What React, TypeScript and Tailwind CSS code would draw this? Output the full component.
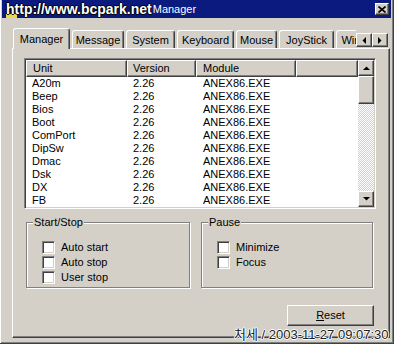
const rows = ["A20m", "Beep", "Bios", "Boot", "ComPort", "DipSw", "Dmac", "Dsk", "DX", "FB"];

const tabs = [
  { label: "Manager", w: "w-[57px]", active: true },
  { label: "Message", w: "w-[52px]" },
  { label: "System", w: "w-[49px]" },
  { label: "Keyboard", w: "w-[57px]" },
  { label: "Mouse", w: "w-[41px]" },
  { label: "JoyStick", w: "w-[55px]" },
  { label: "Window", w: "w-[50px]" },
];

const Arrow = ({ dir }: { dir: "up" | "down" | "left" | "right" }) => {
  const pts = {
    up: "0,4 7,4 3.5,0.5",
    down: "0,0 7,0 3.5,3.5",
    left: "4,0 4,7 0.5,3.5",
    right: "0,0 0,7 3.5,3.5",
  }[dir];
  const vertical = dir === "up" || dir === "down";
  return (
    <svg width={vertical ? 7 : 4} height={vertical ? 4 : 7} viewBox={vertical ? "0 0 7 4" : "0 0 4 7"}>
      <polygon points={pts} fill="#000" />
    </svg>
  );
};

const Check = ({ label }: { label: string }) => (
  <div className="flex items-center h-[15px] gap-[6px]">
    <div className="w-[13px] h-[13px] bg-white border border-t-[#808080] border-l-[#808080] border-r-white border-b-white shadow-[inset_1px_1px_#404040,inset_-1px_-1px_#d4d0c8]" />
    <span className="text-[11px] leading-[13px]">{label}</span>
  </div>
);

const Group = ({ title, w, items }: { title: string; w: string; items: string[] }) => (
  <div className={`relative ${w} h-[66px] border border-[#808080] shadow-[1px_1px_0_#fff,inset_1px_1px_0_#fff] pl-[15px] pt-[17px]`}>
    <span className="absolute left-[6px] -top-[7px] px-[1px] bg-[#d4d0c8] text-[11px] leading-[13px]">{title}</span>
    {items.map((it) => (
      <Check key={it} label={it} />
    ))}
  </div>
);

export default function App() {
  return (
    <div className="w-[396px] h-[348px] bg-white font-['Liberation_Sans','Noto_Sans_CJK_KR',sans-serif] text-black">
      <div className="relative w-[394px] h-[344px] bg-[#d4d0c8] border-r border-b border-[#404040] shadow-[inset_1px_0_#fff,inset_-1px_-1px_#808080]">
        {/* title bar */}
        <div className="ml-[2px] mr-[2px] h-[18px] bg-[#0a1a7e] flex items-center justify-between">
          <div className="relative flex items-center h-[18px] pl-[4px]">
            <span className="relative z-10 text-[14px] leading-[18px] font-bold text-white [text-shadow:1px_0_#000,-1px_0_#000,0_1px_#000,0_-1px_#000]">
              http://www.bcpark.net
            </span>
            <span className="ml-[1px] text-[11px] leading-[18px] text-white">Manager</span>
            <span className="absolute left-[4px] top-[14px] w-[11px] h-[4px] bg-[#e8d84a]" />
          </div>
          <div className="mr-[2px] w-[14px] h-[12px] bg-[#d4d0c8] border border-t-white border-l-white border-r-[#404040] border-b-[#404040] shadow-[inset_-1px_-1px_#808080] flex items-center justify-center">
            <svg width="8" height="7" viewBox="0 0 8 7">
              <path d="M0.5 0.5 L7.5 6.5 M7.5 0.5 L0.5 6.5" stroke="#000" strokeWidth="1.6" />
            </svg>
          </div>
        </div>

        {/* tab strip */}
        <div className="mt-[10px] h-[20px] flex items-end">
          <div className="ml-[13px] w-[343px] h-[21px] -mb-px overflow-hidden flex items-end gap-[2px] relative z-10">
            {tabs.map((t) => (
              <div
                key={t.label}
                className={`${t.w} shrink-0 bg-[#d4d0c8] border-t border-l border-white border-r border-r-[#404040] shadow-[inset_-1px_0_#808080] rounded-tl-[3px] rounded-tr-[3px] flex justify-center text-[11px] leading-[13px] whitespace-nowrap ${
                  t.active ? "h-[21px] pt-[4px]" : "h-[18px] pt-[3px] mb-px"
                }`}
              >
                {t.label}
              </div>
            ))}
          </div>
          <div className="self-start mt-[5px] flex">
            <div className="w-[16px] h-[14px] bg-[#d4d0c8] border border-t-white border-l-white border-r-[#404040] border-b-[#404040] shadow-[inset_-1px_-1px_#808080] flex items-center justify-center">
              <Arrow dir="left" />
            </div>
            <div className="w-[16px] h-[14px] bg-[#d4d0c8] border border-t-white border-l-white border-r-[#404040] border-b-[#404040] shadow-[inset_-1px_-1px_#808080] flex items-center justify-center">
              <Arrow dir="right" />
            </div>
          </div>
        </div>

        {/* tab panel */}
        <div className="ml-[12px] w-[378px] h-[290px] border border-t-white border-l-white border-r-[#404040] border-b-[#404040] shadow-[inset_-1px_-1px_#808080]">
          {/* list view */}
          <div className="ml-[11px] mt-[9px] w-[352px] h-[151px] bg-white border border-t-[#808080] border-l-[#808080] border-r-white border-b-white shadow-[inset_1px_1px_#404040,inset_-1px_-1px_#d4d0c8] p-px flex">
            <div className="flex-1 flex flex-col">
              <div className="flex h-[17px] text-[11px] leading-[15px]">
                <div className="w-[101px] bg-[#d4d0c8] border border-t-white border-l-white border-r-[#404040] border-b-[#404040] shadow-[inset_-1px_-1px_#808080] pl-[6px]">Unit</div>
                <div className="w-[69px] bg-[#d4d0c8] border border-t-white border-l-white border-r-[#404040] border-b-[#404040] shadow-[inset_-1px_-1px_#808080] pl-[5px]">Version</div>
                <div className="w-[100px] bg-[#d4d0c8] border border-t-white border-l-white border-r-[#404040] border-b-[#404040] shadow-[inset_-1px_-1px_#808080] pl-[6px]">Module</div>
                <div className="flex-1 bg-[#d4d0c8] border border-t-white border-l-white border-r-[#404040] border-b-[#404040] shadow-[inset_-1px_-1px_#808080]" />
              </div>
              {rows.map((r) => (
                <div key={r} className="flex h-[13px] text-[11px] leading-[13px]">
                  <div className="w-[101px] pl-[6px]">{r}</div>
                  <div className="w-[69px] pl-[6px]">2.26</div>
                  <div className="w-[100px] pl-[7px]">ANEX86.EXE</div>
                </div>
              ))}
            </div>
            {/* scrollbar */}
            <div className="w-[16px] flex flex-col">
              <div className="h-[16px] bg-[#d4d0c8] border border-t-white border-l-white border-r-[#404040] border-b-[#404040] shadow-[inset_-1px_-1px_#808080] flex items-center justify-center">
                <Arrow dir="up" />
              </div>
              <div className="h-[28px] bg-[#d4d0c8] border border-t-white border-l-white border-r-[#404040] border-b-[#404040] shadow-[inset_-1px_-1px_#808080]" />
              <div className="flex-1 [background-image:repeating-conic-gradient(#d4d0c8_0_25%,#fff_0_50%)] [background-size:2px_2px]" />
              <div className="h-[16px] bg-[#d4d0c8] border border-t-white border-l-white border-r-[#404040] border-b-[#404040] shadow-[inset_-1px_-1px_#808080] flex items-center justify-center">
                <Arrow dir="down" />
              </div>
            </div>
          </div>

          {/* groups */}
          <div className="mt-[13px] ml-[13px] flex gap-[11px]">
            <Group title="Start/Stop" w="w-[164px]" items={["Auto start", "Auto stop", "User stop"]} />
            <Group title="Pause" w="w-[172px]" items={["Minimize", "Focus"]} />
          </div>

          {/* reset */}
          <div className="mt-[17px] ml-[274px] w-[87px] h-[21px] bg-[#d4d0c8] border border-t-white border-l-white border-r-[#404040] border-b-[#404040] shadow-[inset_-1px_-1px_#808080] flex items-center justify-center text-[11px] leading-[13px]">
            <span>
              <span className="underline">R</span>eset
            </span>
          </div>
        </div>

        {/* timestamp watermark */}
        <span className="absolute left-[234px] top-[327px] text-[13px] leading-[16px] text-[#1a1a1a] whitespace-nowrap [text-shadow:1px_0_#fff,-1px_0_#fff,0_1px_#fff,0_-1px_#fff]">
          처세 / 2003-11-27 09:07:30
        </span>
      </div>
    </div>
  );
}
